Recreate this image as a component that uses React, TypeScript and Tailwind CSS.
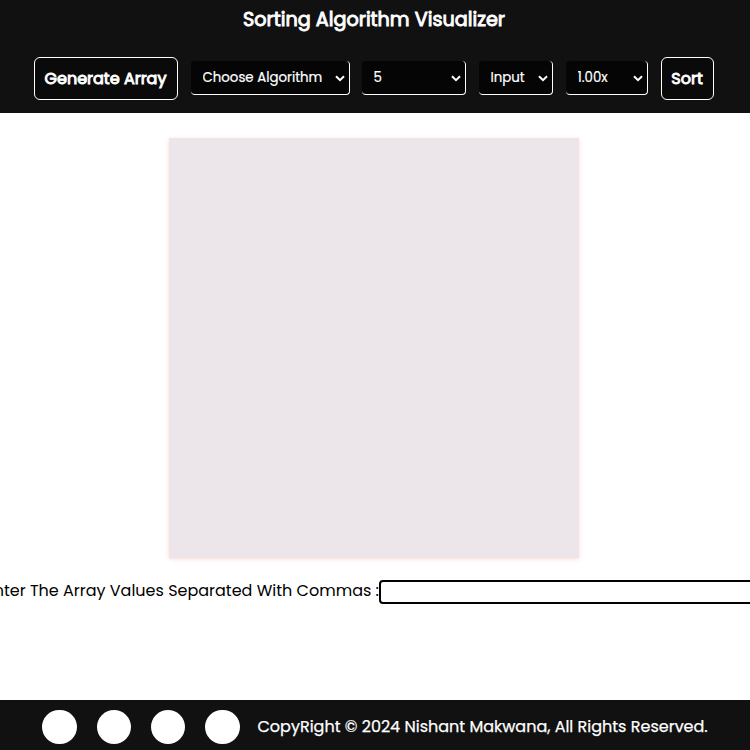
import React from "react";

type PickerProps = { label: string; width: string };

function Picker({ label, width }: PickerProps) {
  return (
    <div className={`relative h-[34px] shrink-0 ${width}`}>
      <select className="block h-full w-full appearance-none rounded border-r border-b border-white bg-[#050505] pt-px pl-[11.5px] text-[13.333px] text-white outline-none [-webkit-text-stroke:0.2px_white]">
        <option>{label}</option>
      </select>
      <svg className="pointer-events-none absolute top-[14px] right-[5px] h-[7px] w-[10px]" viewBox="0 0 10 7" fill="none" stroke="white" strokeWidth="2">
        <path d="M1 1.2 L5 5.2 L9 1.2" />
      </svg>
    </div>
  );
}

export default function App() {
  return (
    <div className="flex h-[750px] w-[750px] flex-col overflow-hidden bg-white font-['Poppins','Inter',sans-serif]">
      <header className="h-[113px] shrink-0 bg-[#111111] text-white">
        <h1 className="flex h-[39px] items-center justify-center pt-px pr-[2px] text-[19.2px] font-normal whitespace-nowrap [-webkit-text-stroke:0.9px_white]">
          Sorting Algorithm Visualizer
        </h1>
        <div className="mt-[18px] flex items-center pl-[34px]">
          <button className="h-[43px] w-[144px] rounded-md border border-white bg-[#0a0a0a] pr-px text-[16px] font-normal whitespace-nowrap [-webkit-text-stroke:0.9px_white]">Generate Array</button>
          <div className="ml-[13px] flex h-[43px] items-center pb-px">
            <Picker label="Choose Algorithm" width="w-[159px]" />
            <div className="w-3" />
            <Picker label="5" width="w-[104px]" />
            <div className="w-[13px]" />
            <Picker label="Input" width="w-[74px]" />
            <div className="w-[13px]" />
            <Picker label="1.00x" width="w-[82px]" />
          </div>
          <button className="ml-[13px] h-[43px] w-[53px] rounded-md border border-white bg-[#0a0a0a] pr-px text-[16px] font-normal [-webkit-text-stroke:0.9px_white]">Sort</button>
        </div>
      </header>
      <main className="flex h-[587px] shrink-0 flex-col">
        <div className="mt-[25px] ml-[169px] h-[420px] w-[410px] shrink-0 bg-[#ece6ea] shadow-[0_1px_4px_rgba(255,99,71,0.25)]" />
        <div className="mt-[22px] flex h-6 w-[800px] items-center">
          <label className="flex w-[379px] shrink-0 justify-end pb-[3px] text-[16px] font-normal whitespace-nowrap text-black">
            Enter The Array Values Separated With Commas :
          </label>
          <input className="h-6 w-[410px] shrink-0 rounded border-2 border-black bg-white outline-none" />
        </div>
      </main>
      <footer className="flex h-[50px] shrink-0 items-center bg-[#111111] pt-[4px] pl-[42px] text-white">
        <div className="flex gap-5">
          <a className="h-[34px] w-[35px] rounded-full bg-white" />
          <a className="h-[34px] w-[34px] rounded-full bg-white" />
          <a className="h-[34px] w-[34px] rounded-full bg-white" />
          <a className="h-[34px] w-[35px] rounded-full bg-white" />
        </div>
        <p className="ml-[17.5px] text-[16px] font-normal whitespace-nowrap [-webkit-text-stroke:0.25px_white]">CopyRight © 2024 Nishant Makwana, All Rights Reserved.</p>
      </footer>
    </div>
  );
}
